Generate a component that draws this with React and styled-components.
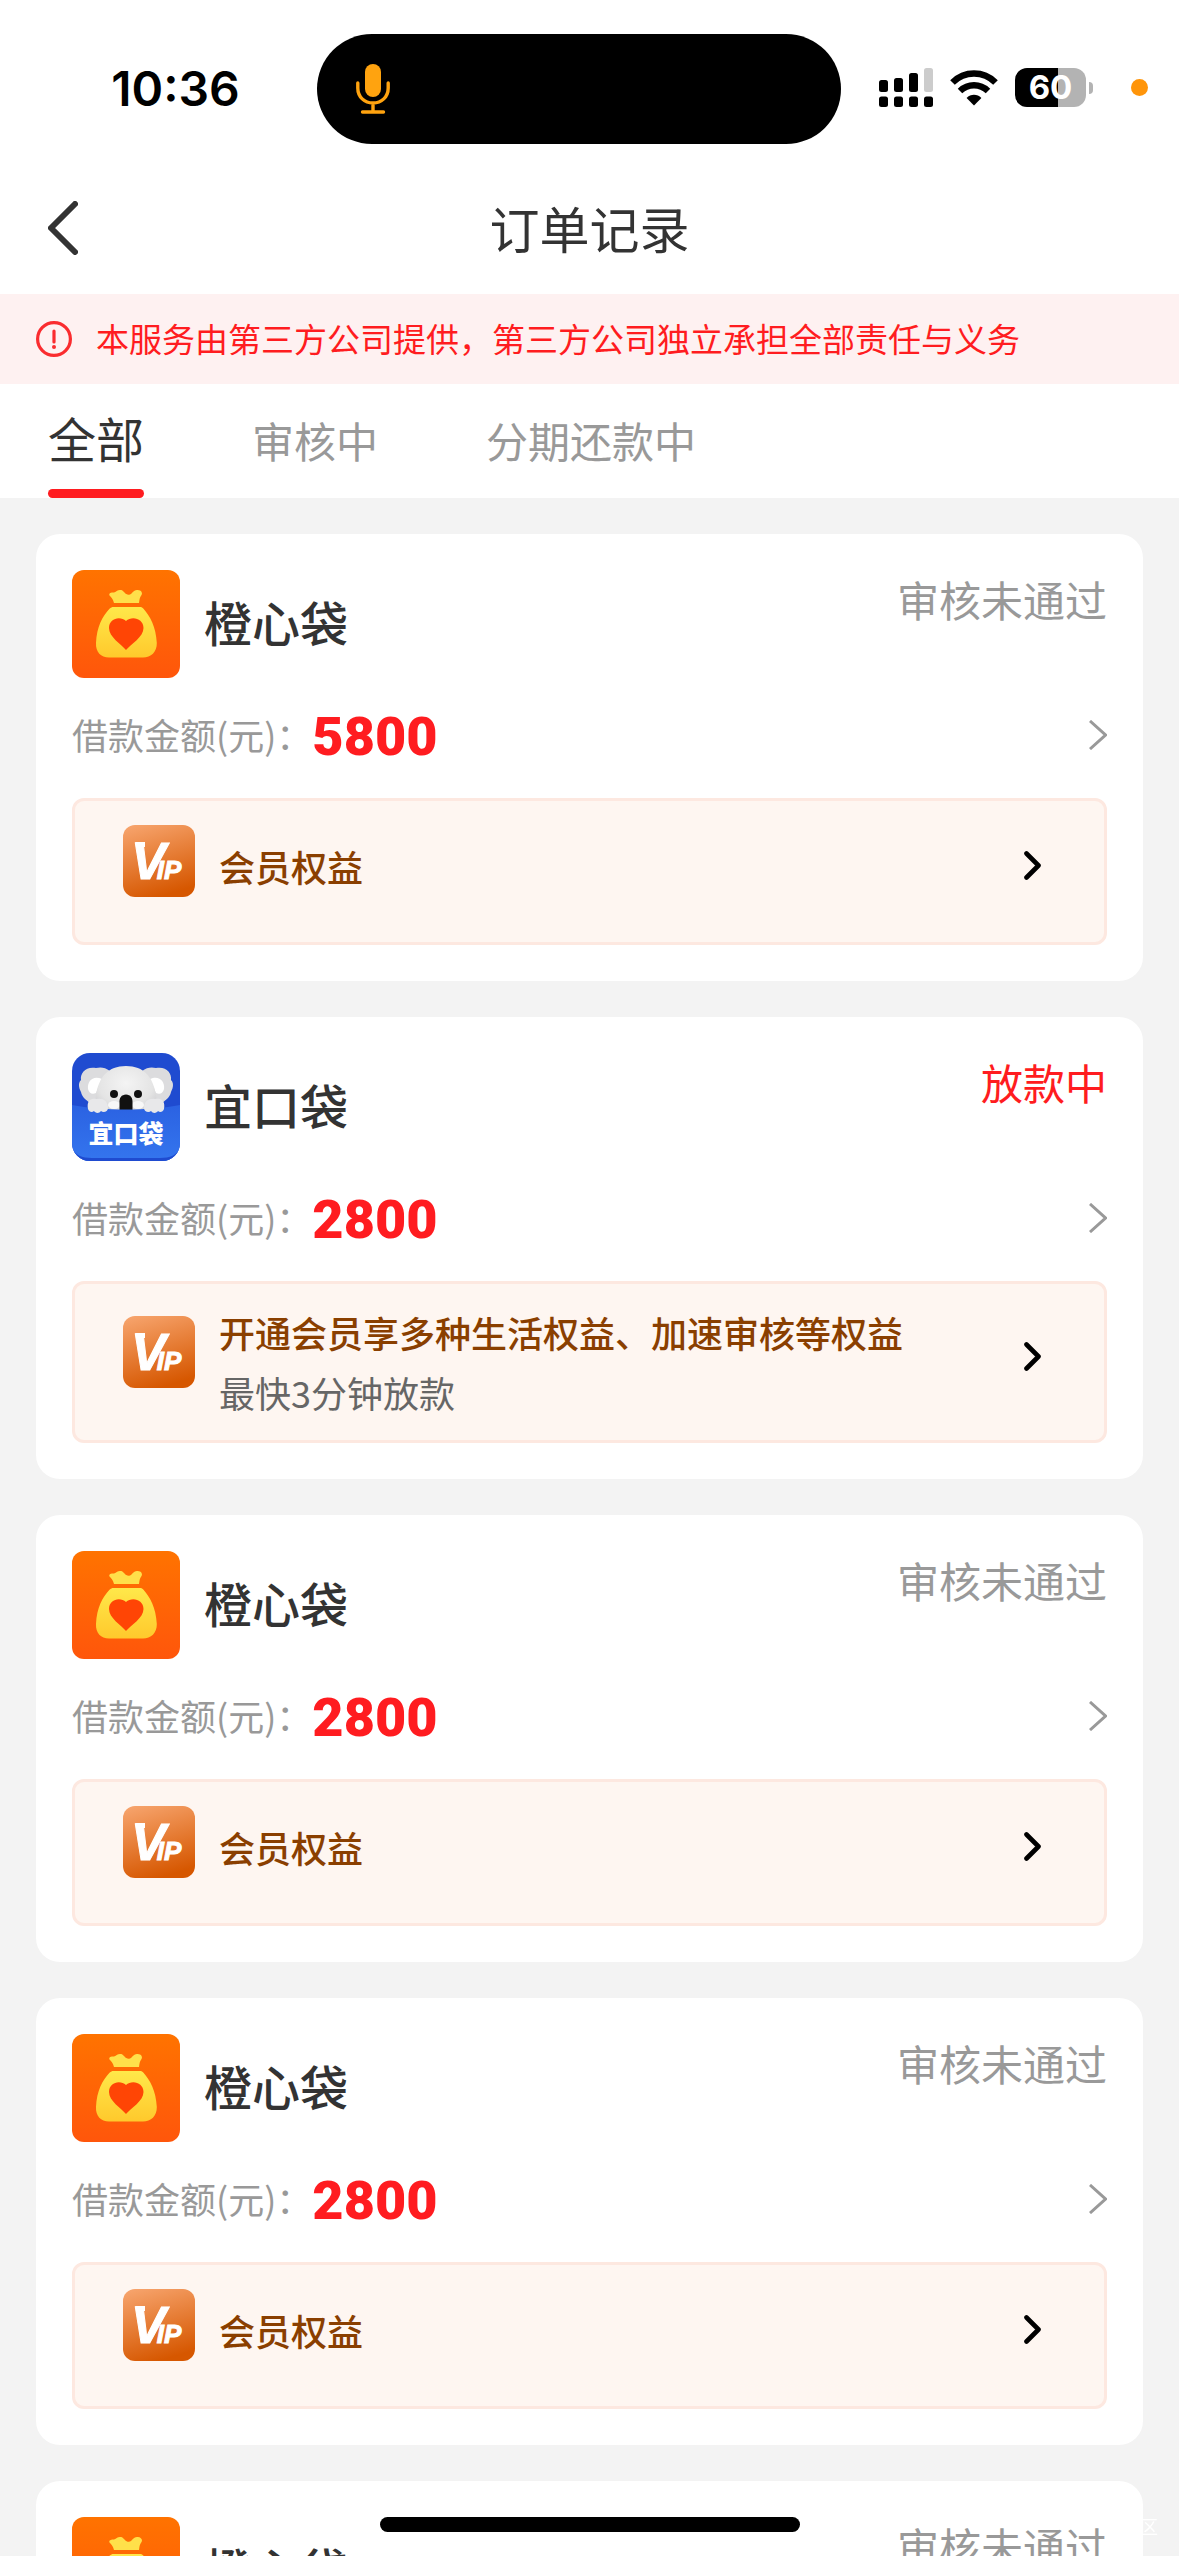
import { useState } from "react"
import styled, { createGlobalStyle } from "styled-components"

const orders = [
    { id: 1, app: "orange", name: "橙心袋", status: "审核未通过", amount: 5800, benefit: "会员权益" },
    {
        id: 2,
        app: "koala",
        name: "宜口袋",
        status: "放款中",
        active: true,
        amount: 2800,
        benefit: "开通会员享多种生活权益、加速审核等权益",
        note: "最快3分钟放款",
    },
    { id: 3, app: "orange", name: "橙心袋", status: "审核未通过", amount: 2800, benefit: "会员权益" },
    { id: 4, app: "orange", name: "橙心袋", status: "审核未通过", amount: 2800, benefit: "会员权益" },
    { id: 5, app: "orange", name: "橙心袋", status: "审核未通过", amount: 2800, benefit: "会员权益" },
]

const tabs = ["全部", "审核中", "分期还款中"]

export default function App() {
    const [current, setCurrent] = useState("全部")

    return (
        <Screen>
            <GlobalStyle />
            <StatusBar />

            <NavBar>
                <BackButton aria-label="返回">
                    <svg width="30" height="54" viewBox="0 0 30 54" fill="none">
                        <path d="M27 3L3 27L27 51" stroke="#333" strokeWidth="6" strokeLinecap="round" strokeLinejoin="round" />
                    </svg>
                </BackButton>
                <Title>订单记录</Title>
            </NavBar>

            <Notice>
                <svg width="36" height="36" viewBox="0 0 36 36" fill="none">
                    <circle cx="18" cy="18" r="16.4" stroke="#fa2c2f" strokeWidth="3.2" />
                    <path d="M18 10V21" stroke="#fa2c2f" strokeWidth="3.2" strokeLinecap="round" />
                    <circle cx="18" cy="26" r="2" fill="#fa2c2f" />
                </svg>
                <NoticeText>本服务由第三方公司提供，第三方公司独立承担全部责任与义务</NoticeText>
            </Notice>

            <Tabs role="tablist">
                {tabs.map((tab) => (
                    <Tab key={tab} role="tab" aria-selected={tab === current} $on={tab === current} onClick={() => setCurrent(tab)}>
                        {tab}
                    </Tab>
                ))}
            </Tabs>

            <OrderList>
                {orders.map((order) => (
                    <OrderCard key={order.id} order={order} />
                ))}
            </OrderList>

            <Watermark>区</Watermark>
            <HomeIndicator />
        </Screen>
    )
}

function StatusBar() {
    return (
        <StatusRow>
            <Clock>10:36</Clock>
            <Island>
                <svg width="34" height="50" viewBox="0 0 34 50" fill="none">
                    <rect x="9" y="0" width="16" height="33" rx="8" fill="#ffa30f" />
                    <path d="M1.8 19V24C1.8 33 8.5 39 17 39S32.2 33 32.2 24V19M17 39V48M6.5 48H27.5" stroke="#ffa30f" strokeWidth="3.4" strokeLinecap="round" />
                </svg>
            </Island>
            <StatusIcons>
                <svg width="54" height="39" viewBox="0 0 54 39">
                    <rect x="0" y="12" width="9" height="12" rx="2.5" />
                    <rect x="15" y="10" width="9" height="14" rx="2.5" />
                    <rect x="30" y="5" width="9" height="19" rx="2.5" />
                    <rect x="45" y="0" width="9" height="24" rx="2.5" fill="#ccc" />
                    <rect x="0" y="28.5" width="9" height="10.5" rx="2.5" />
                    <rect x="15" y="28.5" width="9" height="10.5" rx="2.5" />
                    <rect x="30" y="28.5" width="9" height="10.5" rx="2.5" />
                    <rect x="45" y="28.5" width="9" height="10.5" rx="2.5" />
                </svg>
                <svg width="48" height="36" viewBox="0 0 48 36" fill="none">
                    <path d="M2.5 12.5C14.5 0.5 33.5 0.5 45.5 12.5" stroke="#000" strokeWidth="6.5" />
                    <path d="M10 21C18 13.4 30 13.4 38 21" stroke="#000" strokeWidth="6.5" />
                    <path d="M24 35.5L16.6 28C20.6 23.8 27.4 23.8 31.4 28Z" fill="#000" />
                </svg>
                <Battery>
                    <BatteryBody>60</BatteryBody>
                    <BatteryCap />
                </Battery>
                <RecordDot />
            </StatusIcons>
        </StatusRow>
    )
}

function OrderCard({ order }) {
    return (
        <Card>
            <CardTop>
                {order.app === "koala" ? <KoalaLogo /> : <OrangeLogo />}
                <AppName>{order.name}</AppName>
                <OrderStatus $active={order.active}>{order.status}</OrderStatus>
            </CardTop>

            <AmountRow>
                <AmountLabel>借款金额(元)：</AmountLabel>
                <Amount>{order.amount}</Amount>
                <svg width="18" height="30" viewBox="0 0 18 30" fill="none">
                    <path d="M1 1L16.5 15L1 29" stroke="#999" strokeWidth="3" />
                </svg>
            </AmountRow>

            <Benefit>
                <VipLogo />
                <BenefitText $withNote={Boolean(order.note)}>
                    <BenefitTitle>{order.benefit}</BenefitTitle>
                    {order.note && <BenefitNote>{order.note}</BenefitNote>}
                </BenefitText>
                <svg width="17" height="29" viewBox="0 0 17 29" fill="none">
                    <path d="M2.5 2.5L14.5 14.5L2.5 26.5" stroke="#000" strokeWidth="4.6" strokeLinecap="round" strokeLinejoin="round" />
                </svg>
            </Benefit>
        </Card>
    )
}

function OrangeLogo() {
    return (
        <svg width="108" height="108" viewBox="0 0 108 108">
            <defs>
                <linearGradient id="orangeBg" x1="0" y1="0" x2="0" y2="1">
                    <stop offset="0" stopColor="#ff7300" />
                    <stop offset="1" stopColor="#ff560b" />
                </linearGradient>
                <linearGradient id="bag" x1="0" y1="0" x2="0" y2="1">
                    <stop offset="0" stopColor="#ffe84a" />
                    <stop offset="1" stopColor="#ffc92c" />
                </linearGradient>
            </defs>
            <rect width="108" height="108" rx="12" fill="url(#orangeBg)" />
            <path d="M42 33C41 29 39 27 37.5 25.5C36.5 23 39 22.5 42 22.5C45 21 46 19.5 49 20C52 20.5 53 25 57 24.8C60 24.5 61 20 65 20C69 19.5 71 23 69.5 25C67.5 27.500 67.500 30 67 33Z" fill="#ffe04a" />
            <path d="M41.5 37H68C69.5 37 70.5 37.6 71.5 38.8C78 46 84 57 84.8 73C85 82 79 87.5 71 87.5H37C29 87.5 23.5 82 24 73C24.8 57 30.5 46 37.5 38.8C38.8 37.5 40 37 41.5 37Z" fill="url(#bag)" />
            <path d="M54 80C49 74 37 67 37 58C37 48.5 48 45.5 54 51C60 45.5 71.5 48.5 71.5 58C71.5 67 59 74 54 80Z" fill="#ff4505" />
        </svg>
    )
}

function KoalaLogo() {
    return (
        <svg width="108" height="108" viewBox="0 0 108 108">
            <defs>
                <clipPath id="koalaTile">
                    <rect width="108" height="108" rx="18" />
                </clipPath>
                <linearGradient id="pocket" x1="0" y1="0" x2="0" y2="1">
                    <stop offset="0" stopColor="#2b62e2" />
                    <stop offset="1" stopColor="#3475ee" />
                </linearGradient>
                <radialGradient id="fur" cx="0.5" cy="0.35" r="0.65">
                    <stop offset="0" stopColor="#f4f4f4" />
                    <stop offset="0.7" stopColor="#e4e4e4" />
                    <stop offset="1" stopColor="#cfcfd2" />
                </radialGradient>
            </defs>
            <g clipPath="url(#koalaTile)">
                <rect width="108" height="108" fill="#1f4bd0" />
                <path d="M24 15C14 13 8 20 9 27C5 31 8 37 9 39C10 45 15 47 20 52L34 52L38 18C33 14 28 14 24 15Z" fill="#dcdcde" />
                <path d="M84 15C94 13 100 20 99 27C103 31 100 37 99 39C98 45 93 47 88 52L74 52L70 18C75 14 80 14 84 15Z" fill="#dcdcde" />
                <path d="M30 26C21 22 15 28 16 36C17 40 20 42 24 40Z" fill="#fff" />
                <path d="M78 26C87 22 93 28 92 36C91 40 88 42 84 40Z" fill="#fff" />
                <path d="M54 13C36 13 27 24 24 42C22 52 26 62 54 62S86 52 84 42C81 24 72 13 54 13Z" fill="url(#fur)" />
                <ellipse cx="42" cy="52" rx="6" ry="4" fill="#f8f8f8" />
                <ellipse cx="66" cy="52" rx="6" ry="4" fill="#f8f8f8" />
                <circle cx="42" cy="41" r="4" fill="#111" />
                <circle cx="66" cy="41" r="4" fill="#111" />
                <path d="M54 41.5C49.5 41.5 47 45 47.5 50V57H60.5V50C61 45 58.5 41.5 54 41.5Z" fill="#111" />
                <path d="M0 52C30 58 78 58 108 52V108H0Z" fill="url(#pocket)" />
                <path d="M0 95C3 102 10 105 20 105H88C98 105 105 102 108 95V108H0Z" fill="#1f4bd0" />
                <path d="M16 56C14 46 21 45 25 46C31 45 36 48 36 55C36 59 31 60 29 58C27 61 23 60 22 58C20 60 17 59 16 56Z" fill="#e8e8ea" />
                <path d="M92 56C94 46 87 45 83 46C77 45 72 48 72 55C72 59 77 60 79 58C81 61 85 60 86 58C88 60 91 59 92 56Z" fill="#e8e8ea" />
                <LogoText x="54" y="90" textAnchor="middle">宜口袋</LogoText>
            </g>
        </svg>
    )
}

function VipLogo() {
    return (
        <VipSvg width="72" height="72" viewBox="0 0 72 72">
            <defs>
                <linearGradient id="vipBg" x1="0.2" y1="0" x2="0.5" y2="1">
                    <stop offset="0" stopColor="#f6a26a" />
                    <stop offset="1" stopColor="#d65700" />
                </linearGradient>
            </defs>
            <rect width="72" height="72" rx="12" fill="url(#vipBg)" />
            <path d="M12 17H22V22H14Z" fill="#fff" />
            <VipText x="8" y="54">
                V
                <tspan dx="-9" fontSize="26">IP</tspan>
            </VipText>
        </VipSvg>
    )
}

const GlobalStyle = createGlobalStyle`
    * {
        box-sizing: border-box;
    }
    body {
        margin: 0;
        background: #f3f3f3;
        font-family: "Noto Sans CJK SC", sans-serif;
    }
    button {
        padding: 0;
        border: 0;
        background: none;
        font: inherit;
        cursor: pointer;
    }
    svg {
        display: block;
        flex: none;
    }
`

const Screen = styled.div`
    display: flex;
    flex-direction: column;
    height: 100vh;
    overflow: hidden;
    background: #f3f3f3;
    color: #333;
`

const StatusRow = styled.header`
    display: grid;
    grid-template-columns: 1fr auto 1fr;
    align-items: center;
    padding: 34px 31px 0 10px;
    background: #fff;
`
const Clock = styled.time`
    padding-left: 24px;
    text-align: center;
    font-family: Inter, sans-serif;
    font-size: 48px;
    font-weight: 600;
    line-height: 60px;
    color: #000;
`
const Island = styled.div`
    display: flex;
    align-items: center;
    width: 524px;
    height: 110px;
    padding-left: 39px;
    border-radius: 55px;
    background: #000;
`
const StatusIcons = styled.div`
    display: flex;
    align-items: center;
    justify-content: flex-end;
    gap: 17px;
    padding-bottom: 3px;
`
const Battery = styled.div`
    display: flex;
    align-items: center;
    gap: 3px;
`
const BatteryBody = styled.div`
    width: 71px;
    height: 39px;
    border-radius: 12px;
    background: linear-gradient(90deg, #000 60%, #b3b3b3 60%);
    color: #fff;
    font-family: Inter, sans-serif;
    font-size: 33px;
    font-weight: 700;
    line-height: 39px;
    text-align: center;
`
const BatteryCap = styled.div`
    width: 4px;
    height: 12px;
    border-radius: 0 4px 4px 0;
    background: #b3b3b3;
`
const RecordDot = styled.div`
    width: 17px;
    height: 17px;
    margin-left: 21px;
    border-radius: 50%;
    background: #ff950a;
`

const NavBar = styled.nav`
    display: grid;
    grid-template-columns: 1fr auto 1fr;
    align-items: center;
    height: 150px;
    padding: 18px 48px 0;
    background: #fff;
`
const BackButton = styled.button`
    justify-self: start;
`
const Title = styled.h1`
    margin: 0;
    padding-bottom: 3px;
    font-size: 50px;
    font-weight: 400;
    line-height: 72px;
`

const Notice = styled.div`
    display: flex;
    align-items: center;
    gap: 24px;
    height: 90px;
    padding: 0 36px;
    background: #fef1f1;
`
const NoticeText = styled.p`
    margin: 0;
    padding-bottom: 3px;
    font-size: 33px;
    line-height: 48px;
    color: #ff1c20;
`

const Tabs = styled.div`
    display: flex;
    gap: 108px;
    height: 114px;
    padding: 0 48px;
    background: #fff;
`
const Tab = styled.button`
    position: relative;
    padding-top: ${(props) => (props.$on ? 0 : 6)}px;
    border-bottom: 9px solid transparent;
    font-size: ${(props) => (props.$on ? 48 : 42)}px;
    line-height: 60px;
    color: ${(props) => (props.$on ? "#333" : "#999")};

    &::after {
        content: "";
        display: ${(props) => (props.$on ? "block" : "none")};
        position: absolute;
        left: 0;
        right: 0;
        bottom: -9px;
        height: 9px;
        border-radius: 5px;
        background: #ff1c20;
    }
`

const OrderList = styled.main`
    display: flex;
    flex-direction: column;
    flex: 1;
    gap: 36px;
    min-height: 0;
    padding: 36px;
    overflow: hidden;
`
const Card = styled.article`
    flex: none;
    padding: 36px;
    border-radius: 24px;
    background: #fff;
`
const CardTop = styled.div`
    display: flex;
    align-items: center;
    gap: 24px;
`
const AppName = styled.h2`
    flex: 1;
    margin: 0;
    padding-bottom: 6px;
    font-size: 48px;
    font-weight: 500;
    line-height: 72px;
`
const OrderStatus = styled.span`
    align-self: flex-start;
    font-size: 42px;
    line-height: 57px;
    color: ${(props) => (props.$active ? "#ff1c20" : "#999")};
`
const AmountRow = styled.a.attrs({ href: "#detail" })`
    display: flex;
    align-items: center;
    height: 66px;
    margin: 24px 0 30px;
    text-decoration: none;
`
const AmountLabel = styled.span`
    padding-bottom: 3px;
    font-size: 36px;
    line-height: 48px;
    color: #999;
`
const Amount = styled.strong`
    flex: 1;
    padding-top: 3px;
    font-family: Roboto, sans-serif;
    font-size: 54px;
    font-weight: 900;
    line-height: 66px;
    color: #ff1c20;
`
const Benefit = styled.button`
    display: flex;
    align-items: center;
    gap: 24px;
    width: 100%;
    min-height: 147px;
    padding: 0 63px 12px 48px;
    border: 3px solid #fde8e0;
    border-radius: 12px;
    background: #fef6f1;
    text-align: left;
`
const BenefitText = styled.span`
    display: flex;
    flex: 1;
    flex-direction: column;
    padding: ${(props) => (props.$withNote ? "18px 0 6px" : "12px 0")};
    font-size: 36px;
    line-height: 60px;
`
const BenefitTitle = styled.span`
    font-weight: 500;
    color: #8a3f00;
`
const BenefitNote = styled.span`
    color: #666;
`
const VipSvg = styled.svg`
    margin-bottom: 9px;
`
const VipText = styled.text`
    fill: #fff;
    stroke: #fff;
    stroke-width: 1px;
    font-family: "Liberation Sans", sans-serif;
    font-size: 52px;
    font-style: italic;
    font-weight: 700;
`
const LogoText = styled.text`
    fill: #fff;
    font-size: 25px;
    font-weight: 900;
`

const Watermark = styled.span`
    position: fixed;
    right: 21px;
    bottom: 18px;
    font-size: 18px;
    line-height: 24px;
    color: #fff;
`
const HomeIndicator = styled.div`
    position: fixed;
    bottom: 24px;
    left: 50%;
    width: 420px;
    height: 15px;
    border-radius: 8px;
    background: #000;
    transform: translateX(-50%);
`
